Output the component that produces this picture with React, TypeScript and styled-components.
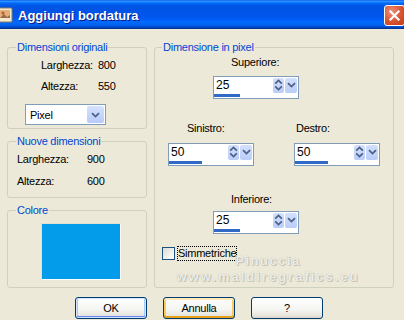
import styled, { createGlobalStyle, css } from 'styled-components'

const GlobalStyle = createGlobalStyle`
  html, body {
    margin: 0;
    padding: 0;
    background: #ece9d8;
  }
  body {
    font-family: "Liberation Sans", Arial, sans-serif;
    font-size: 11px;
    letter-spacing: -0.25px;
    color: #000;
  }
`

const ChevronDown = (): React.JSX.Element => (
  <svg width="9" height="6" viewBox="0 0 9 6">
    <path d="M1 1.2 L4.5 4.6 L8 1.2" fill="none" stroke="#4d6185" strokeWidth="1.8" />
  </svg>
)

const UpDownArrows = (): React.JSX.Element => (
  <svg width="9" height="14" viewBox="0 0 9 14">
    <path d="M1.2 5.6 L4.5 2.4 L7.8 5.6" fill="none" stroke="#4d6185" strokeWidth="1.7" />
    <path d="M1.2 8.4 L4.5 11.6 L7.8 8.4" fill="none" stroke="#4d6185" strokeWidth="1.7" />
  </svg>
)

const AppIcon = (): React.JSX.Element => (
  <svg width="16" height="16" viewBox="0 0 16 16">
    <rect x="1" y="1" width="14" height="14" rx="1" fill="#f3ead2" stroke="#8a7a5c" />
    <rect x="3" y="3" width="10" height="8" fill="#e4b07a" />
    <circle cx="6" cy="6" r="1.6" fill="#c25a3a" />
    <path d="M3 11 L7 7 L10 10 L13 8 L13 11 Z" fill="#9a6a4a" />
  </svg>
)

type SpinFieldProps = {
  label: string
  value: string
  fill: number
  labelIndent: number
  labelGap?: number
}

const SpinField = ({ label, value, fill, labelIndent, labelGap = 7 }: SpinFieldProps): React.JSX.Element => (
  <Field>
    <FieldLabel $indent={labelIndent} $gap={labelGap}>
      {label}
    </FieldLabel>
    <SpinBox>
      <SpinRow>
        <SpinValue>{value}</SpinValue>
        <SpinButton $w={11}>
          <UpDownArrows />
        </SpinButton>
        <SpinButton $w={12}>
          <ChevronDown />
        </SpinButton>
      </SpinRow>
      <SpinTrack>
        <SpinFill style={{ width: fill }} />
      </SpinTrack>
    </SpinBox>
  </Field>
)

export default function App(): React.JSX.Element {
  return (
    <>
      <GlobalStyle />
      <Window>
        <TitleBar>
          <TitleIcon>
            <AppIcon />
          </TitleIcon>
          <TitleText>Aggiungi bordatura</TitleText>
          <CloseButton>
            <svg width="13" height="13" viewBox="0 0 13 13">
              <path d="M2.5 2.5 L10.5 10.5 M10.5 2.5 L2.5 10.5" stroke="#fff" strokeWidth="2.2" strokeLinecap="square" />
            </svg>
          </CloseButton>
        </TitleBar>

        <Body>
          <LeftColumn>
            <Group>
              <Legend>Dimensioni originali</Legend>
              <GroupInner $pad="0 0 3px 33px">
                <InfoGrid $labelWidth={57} $rowHeight={21}>
                  <span>Larghezza:</span>
                  <span>800</span>
                  <span>Altezza:</span>
                  <span>550</span>
                </InfoGrid>
                <Select>
                  <SelectValue>Pixel</SelectValue>
                  <SelectButton>
                    <ChevronDown />
                  </SelectButton>
                </Select>
              </GroupInner>
            </Group>

            <Group>
              <Legend>Nuove dimensioni</Legend>
              <GroupInner $pad="0 0 5px 9px">
                <InfoGrid $labelWidth={70} $rowHeight={22}>
                  <span>Larghezza:</span>
                  <span>900</span>
                  <span>Altezza:</span>
                  <span>600</span>
                </InfoGrid>
              </GroupInner>
            </Group>

            <Group>
              <Legend>Colore</Legend>
              <GroupInner $pad="6px 0 7px 33px">
                <Swatch $color="#039cea" />
              </GroupInner>
            </Group>
          </LeftColumn>

          <Group>
            <Legend $offset={7}>Dimensione in pixel</Legend>
            <PixelInner>
              <SpinRowLine $indent={58} $top={2}>
                <SpinField label="Superiore:" value="25" fill={26} labelIndent={18} />
              </SpinRowLine>
              <SpinRowLine $indent={13} $top={23} $gap={40}>
                <SpinField label="Sinistro:" value="50" fill={33} labelIndent={19} labelGap={8} />
                <SpinField label="Destro:" value="50" fill={33} labelIndent={2} labelGap={8} />
              </SpinRowLine>
              <SpinRowLine $indent={58} $top={27}>
                <SpinField label="Inferiore:" value="25" fill={26} labelIndent={18} labelGap={5} />
              </SpinRowLine>
              <CheckRow>
                <CheckBox />
                <FocusLabel>Simmetriche</FocusLabel>
              </CheckRow>
            </PixelInner>
          </Group>
        </Body>

        <ButtonRow>
          <PushButton $variant="default">OK</PushButton>
          <PushButton $variant="hover">Annulla</PushButton>
          <PushButton>?</PushButton>
        </ButtonRow>

        <Watermark>
          <WatermarkLine $spacing={1.5}>Pinuccia</WatermarkLine>
          <WatermarkLine $spacing={2}>www.maldiregrafics.eu</WatermarkLine>
        </Watermark>
      </Window>
    </>
  )
}

const Window = styled.div`
  position: relative;
  width: 404px;
  height: 320px;
  overflow: hidden;
  background: #ece9d8;
  display: flex;
  flex-direction: column;
`

const TitleBar = styled.div`
  height: 29px;
  flex: none;
  display: flex;
  align-items: center;
  letter-spacing: 0;
  background: linear-gradient(
    to bottom,
    #0058ee 0%,
    #3593ff 4%,
    #288eff 6%,
    #127dff 8%,
    #036ffc 10%,
    #0262ee 14%,
    #0057e5 20%,
    #0054e3 24%,
    #0055eb 56%,
    #005bf5 66%,
    #026afe 76%,
    #0062ef 86%,
    #0052d6 92%,
    #0040ab 96%,
    #003092 100%
  );
`

const TitleIcon = styled.div`
  display: flex;
  margin-left: -3px;
  margin-top: 1px;
`

const TitleText = styled.div`
  margin-left: 5px;
  margin-top: 1px;
  color: #fff;
  font-family: "Liberation Sans", Arial, sans-serif;
  font-weight: 700;
  font-size: 13px;
  text-shadow: 1px 1px 0 #0a1883;
`

const CloseButton = styled.div`
  margin-left: auto;
  margin-right: -1px;
  margin-top: 2px;
  width: 21px;
  height: 21px;
  box-sizing: border-box;
  border: 1px solid #fff;
  border-radius: 3px;
  display: flex;
  align-items: center;
  justify-content: center;
  background: radial-gradient(circle at 35% 30%, #e8917a 0%, #d9542f 55%, #c1391a 100%);
`

const Body = styled.div`
  display: grid;
  grid-template-columns: 140px 240px;
  column-gap: 7px;
  padding: 12px 0 0 7px;
  align-items: stretch;
`

const LeftColumn = styled.div`
  display: flex;
  flex-direction: column;
  gap: 6px;
`

const Group = styled.fieldset`
  margin: 0;
  padding: 0;
  min-width: 0;
  border: 1px solid #d0d0bf;
  border-radius: 3px;
`

const Legend = styled.legend<{ $offset?: number }>`
  margin-left: ${({ $offset }) => $offset ?? 8}px;
  padding: 0 1px;
  line-height: 13px;
  font-size: 11px;
  color: #0046d5;
`

const GroupInner = styled.div<{ $pad: string }>`
  padding: ${({ $pad }) => $pad};
`

const InfoGrid = styled.div<{ $labelWidth: number; $rowHeight: number }>`
  display: grid;
  grid-template-columns: ${({ $labelWidth }) => $labelWidth}px auto;
  grid-auto-rows: ${({ $rowHeight }) => $rowHeight}px;
  align-items: center;
`

const Select = styled.div`
  margin: 8px 0 0 -16px;
  width: 81px;
  height: 21px;
  box-sizing: border-box;
  border: 1px solid #7f9db9;
  background: #fff;
  display: flex;
  align-items: center;
  padding: 1px;
`

const SelectValue = styled.span`
  flex: 1;
  padding-left: 3px;
`

const SelectButton = styled.div`
  width: 17px;
  height: 17px;
  border-radius: 2px;
  background: linear-gradient(to bottom, #d6e2fd, #b7cbf8);
  display: flex;
  align-items: center;
  justify-content: center;
`

const Swatch = styled.div<{ $color: string }>`
  width: 80px;
  height: 57px;
  box-sizing: border-box;
  background: ${({ $color }) => $color};
  border: 1px solid #fff;
  border-top-color: #e2dfd2;
  border-left-color: #e2dfd2;
`

const PixelInner = styled.div`
  display: flex;
  flex-direction: column;
`

const SpinRowLine = styled.div<{ $indent: number; $top: number; $gap?: number }>`
  display: flex;
  gap: ${({ $gap }) => $gap ?? 0}px;
  padding-left: ${({ $indent }) => $indent}px;
  margin-top: ${({ $top }) => $top}px;
`

const Field = styled.div`
  display: flex;
  flex-direction: column;
`

const FieldLabel = styled.span<{ $indent: number; $gap: number }>`
  padding-left: ${({ $indent }) => $indent}px;
  margin-bottom: ${({ $gap }) => $gap}px;
  line-height: 13px;
`

const SpinBox = styled.div`
  width: 86px;
  height: 23px;
  box-sizing: border-box;
  border: 1px solid #7f9db9;
  background: #fff;
  display: flex;
  flex-direction: column;
`

const SpinRow = styled.div`
  height: 16px;
  display: flex;
  align-items: center;
  padding-right: 1px;
`

const SpinValue = styled.span`
  flex: 1;
  padding-left: 2px;
  font-size: 12px;
  letter-spacing: 0;
`

const SpinButton = styled.div<{ $w: number }>`
  width: ${({ $w }) => $w}px;
  height: 15px;
  margin-left: 1px;
  border-radius: 2px;
  background: linear-gradient(to bottom, #d3e0fd, #b9cdf9);
  display: flex;
  align-items: center;
  justify-content: center;
`

const SpinTrack = styled.div`
  margin-top: 1px;
  height: 3px;
`

const SpinFill = styled.div`
  height: 3px;
  background: #316ac5;
`

const CheckRow = styled.div`
  display: flex;
  align-items: center;
  margin-top: 12px;
  padding-left: 7px;
  gap: 2px;
`

const CheckBox = styled.div`
  width: 13px;
  height: 13px;
  box-sizing: border-box;
  border: 1px solid #1c5180;
  background: linear-gradient(135deg, #dcdcd7 0%, #f5f5f1 70%, #ffffff 100%);
`

const FocusLabel = styled.span`
  outline: 1px dotted #000;
  outline-offset: -1px;
  padding: 1px;
  line-height: 13px;
`

const ButtonRow = styled.div`
  display: flex;
  gap: 16px;
  padding-left: 75px;
  margin-top: 9px;
`

const PushButton = styled.div<{ $variant?: 'default' | 'hover' }>`
  width: 72px;
  height: 22px;
  box-sizing: border-box;
  border: 1px solid #003c74;
  border-radius: 3px;
  display: flex;
  align-items: center;
  justify-content: center;
  background: linear-gradient(to bottom, #ffffff 0%, #f4f4f0 60%, #e6e3da 90%, #d6d0c5 100%);
  font-size: 11px;
  ${({ $variant }) =>
    $variant === 'default' &&
    css`
      box-shadow: inset 0 0 0 1px #cee7ff, inset 0 -2px 0 #6982ee, inset 2px 0 0 #a8c8fa, inset -2px 0 0 #a8c8fa;
    `}
  ${({ $variant }) =>
    $variant === 'hover' &&
    css`
      box-shadow: inset 0 2px 0 #ffe9b5, inset 0 -2px 0 #e5a01a, inset 2px 0 0 #fbca5c, inset -2px 0 0 #fbca5c;
    `}
`

const Watermark = styled.div`
  position: absolute;
  left: 176px;
  top: 253px;
  width: 184px;
  display: flex;
  flex-direction: column;
  align-items: center;
  pointer-events: none;
`

const WatermarkLine = styled.span<{ $spacing: number }>`
  font-family: "Liberation Sans", Arial, sans-serif;
  font-weight: 700;
  font-size: 13px;
  line-height: 16px;
  letter-spacing: ${({ $spacing }) => $spacing}px;
  color: rgba(250, 249, 244, 0.85);
  text-shadow: 0 0 1px rgba(150, 146, 134, 0.7), 1px 1px 0 rgba(160, 156, 144, 0.45);
`
